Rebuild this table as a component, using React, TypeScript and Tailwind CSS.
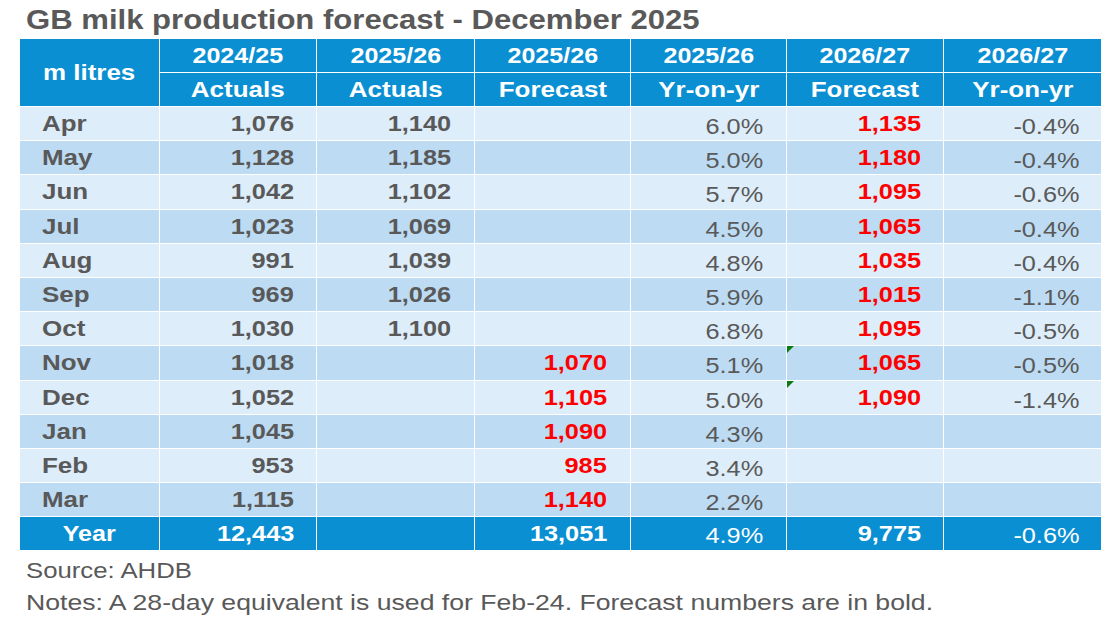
const months = [
  { m: "Apr", a: "1,076", b: "1,140", f: "", y: "6.0%", f2: "1,135", y2: "-0.4%" },
  { m: "May", a: "1,128", b: "1,185", f: "", y: "5.0%", f2: "1,180", y2: "-0.4%" },
  { m: "Jun", a: "1,042", b: "1,102", f: "", y: "5.7%", f2: "1,095", y2: "-0.6%" },
  { m: "Jul", a: "1,023", b: "1,069", f: "", y: "4.5%", f2: "1,065", y2: "-0.4%" },
  { m: "Aug", a: "991", b: "1,039", f: "", y: "4.8%", f2: "1,035", y2: "-0.4%" },
  { m: "Sep", a: "969", b: "1,026", f: "", y: "5.9%", f2: "1,015", y2: "-1.1%" },
  { m: "Oct", a: "1,030", b: "1,100", f: "", y: "6.8%", f2: "1,095", y2: "-0.5%" },
  { m: "Nov", a: "1,018", b: "", f: "1,070", y: "5.1%", f2: "1,065", y2: "-0.5%", flag: true },
  { m: "Dec", a: "1,052", b: "", f: "1,105", y: "5.0%", f2: "1,090", y2: "-1.4%", flag: true },
  { m: "Jan", a: "1,045", b: "", f: "1,090", y: "4.3%", f2: "", y2: "" },
  { m: "Feb", a: "953", b: "", f: "985", y: "3.4%", f2: "", y2: "" },
  { m: "Mar", a: "1,115", b: "", f: "1,140", y: "2.2%", f2: "", y2: "" },
];

const heads = [
  ["2024/25", "Actuals"],
  ["2025/26", "Actuals"],
  ["2025/26", "Forecast"],
  ["2025/26", "Yr-on-yr"],
  ["2026/27", "Forecast"],
  ["2026/27", "Yr-on-yr"],
];

// the source picture is stretched sideways, so text gets a horizontal scale
const Num = ({ children }: { children: React.ReactNode }) => (
  <span className="inline-block origin-right scale-x-[1.15]">{children}</span>
);
const Word = ({ children, origin = "origin-center" }: { children: React.ReactNode; origin?: string }) => (
  <span className={`inline-block scale-x-[1.18] ${origin}`}>{children}</span>
);

const cell = "h-[33.2px] flex items-center text-[22px]";
const head = "h-[33px] bg-[#0a8fd3] text-white font-bold text-[22px] flex items-center justify-center";

const App = () => {
  return (
    <div className="w-[1118px] h-[631px] bg-white text-[#595959]" style={{ fontFamily: '"Liberation Sans", Arial, sans-serif' }}>
      {/* Title */}
      <div className="pl-[26px] pt-[6px] h-[39px] text-[28px] leading-[28px] font-bold">
        <span className="inline-block origin-left scale-x-[1.11]">GB milk production forecast - December 2025</span>
      </div>

      {/* Table */}
      <div className="ml-[20px] w-[1081px] grid grid-cols-[139px_156px_157px_155px_155px_156px_157px] gap-px">
        <div className="row-span-2 bg-[#0a8fd3] text-white font-bold text-[22px] flex items-center justify-center">
          <Word>m litres</Word>
        </div>
        {heads.map((h, i) => (
          <div key={"a" + i} className={head}>
            <span className="inline-block scale-x-[1.14]">{h[0]}</span>
          </div>
        ))}
        {heads.map((h, i) => (
          <div key={"b" + i} className={head}>
            <Word>{h[1]}</Word>
          </div>
        ))}

        {months.map((r, i) => {
          const bg = i % 2 === 0 ? "bg-[#ddedf9]" : "bg-[#bddcf4]";
          return [
            <div key={r.m + "m"} className={`${cell} ${bg} font-bold pl-[22px]`}>
              <Word origin="origin-left">{r.m}</Word>
            </div>,
            <div key={r.m + "a"} className={`${cell} ${bg} font-bold justify-end pr-[22px]`}><Num>{r.a}</Num></div>,
            <div key={r.m + "b"} className={`${cell} ${bg} font-bold justify-end pr-[23px]`}><Num>{r.b}</Num></div>,
            <div key={r.m + "f"} className={`${cell} ${bg} font-bold justify-end pr-[23px] text-[#ff0000]`}><Num>{r.f}</Num></div>,
            <div key={r.m + "y"} className={`${cell} ${bg} justify-end pr-[23px] pt-[6px]`}><Num>{r.y}</Num></div>,
            <div key={r.m + "f2"} className={`${cell} ${bg} relative font-bold justify-end pr-[22px] text-[#ff0000]`}>
              {r.flag && (
                <svg className="absolute left-0 top-0" width="7" height="7" viewBox="0 0 7 7">
                  <polygon points="0,0 7,0 0,7" fill="#0a7a12" />
                </svg>
              )}
              <Num>{r.f2}</Num>
            </div>,
            <div key={r.m + "y2"} className={`${cell} ${bg} justify-end pr-[22px] pt-[6px]`}><Num>{r.y2}</Num></div>,
          ];
        })}

        {/* Year total */}
        <div className={`${cell} bg-[#0a8fd3] text-white font-bold justify-center`}><span className="inline-block scale-x-[1.14]">Year</span></div>
        <div className={`${cell} bg-[#0a8fd3] text-white font-bold justify-end pr-[22px]`}><Num>12,443</Num></div>
        <div className={`${cell} bg-[#0a8fd3]`}></div>
        <div className={`${cell} bg-[#0a8fd3] text-white font-bold justify-end pr-[23px]`}><Num>13,051</Num></div>
        <div className={`${cell} bg-[#0a8fd3] text-white justify-end pr-[23px] pt-[3px]`}><Num>4.9%</Num></div>
        <div className={`${cell} bg-[#0a8fd3] text-white font-bold justify-end pr-[22px]`}><Num>9,775</Num></div>
        <div className={`${cell} bg-[#0a8fd3] text-white justify-end pr-[22px] pt-[3px]`}><Num>-0.6%</Num></div>
      </div>

      {/* Footnotes */}
      <div className="pl-[26px] mt-[5px] text-[22px] leading-[32px]">
        <div><span className="inline-block origin-left scale-x-[1.17]">Source: AHDB</span></div>
        <div><span className="inline-block origin-left scale-x-[1.21]">Notes: A 28-day equivalent is used for Feb-24. Forecast numbers are in bold.</span></div>
      </div>
    </div>
  );
};

export default App;
